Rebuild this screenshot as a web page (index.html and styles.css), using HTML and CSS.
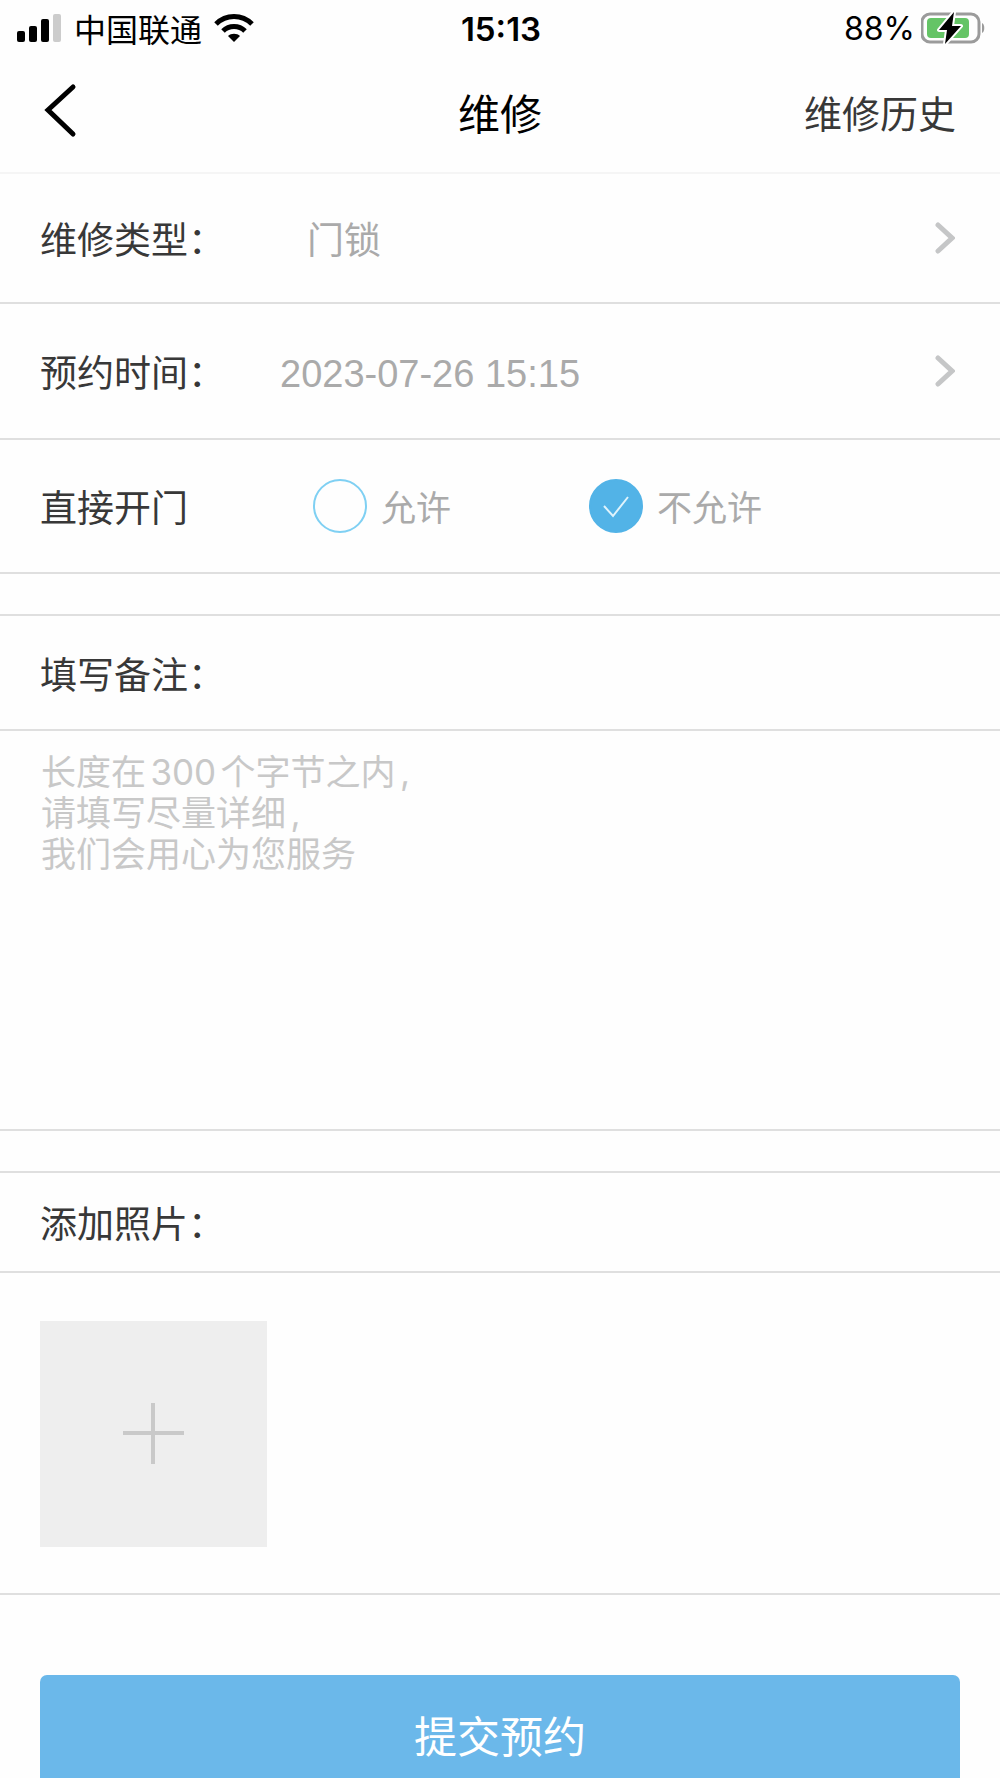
FILE: index.html
```html
<!DOCTYPE html>
<html lang="zh-CN">
<head>
  <meta charset="UTF-8" />
  <meta name="viewport" content="width=device-width, initial-scale=1.0"/>
  <title>维修</title>
  <link rel="stylesheet" href="styles.css">
</head>
<body>
  <div class="status-bar">
    <div class="status-left">
      <svg class="signal" width="45" height="28" viewBox="0 0 45 28" aria-hidden="true">
        <rect x="0" y="17" width="8" height="11" rx="2"/>
        <rect x="12" y="12" width="8" height="16" rx="2"/>
        <rect x="24" y="5" width="8" height="23" rx="2"/>
        <rect x="36" y="0" width="8" height="28" rx="2" fill="#ccc"/>
      </svg>
      <span class="carrier">中国联通</span>
      <svg class="wifi" width="40" height="30" viewBox="0 0 40 30" aria-hidden="true">
        <g fill="none" stroke="#000" stroke-width="5">
          <path d="M2 11 C12 1 28 1 38 11"/>
          <path d="M9 18 C15 12 25 12 31 18"/>
        </g>
        <path d="M20 29 L14 23 C17 20 23 20 26 23 Z"/>
      </svg>
    </div>
    <time class="clock">15:13</time>
    <div class="status-right">
      <span class="percent">88%</span>
      <svg class="battery" width="64" height="34" viewBox="0 0 64 34" aria-hidden="true">
        <rect x="1" y="3" width="57" height="28" rx="8" fill="none" stroke="#9b9b9b" stroke-width="3"/>
        <path d="M61 12 C64 13 64 21 61 22 Z" fill="#9b9b9b"/>
        <rect x="6" y="7" width="42" height="20" rx="4" fill="#65c466"/>
        <path d="M33 1 L18 19 H26 L24 33 L40 15 H31 Z" stroke="#fff" stroke-width="4" stroke-linejoin="round" paint-order="stroke"/>
      </svg>
    </div>
  </div>

  <header>
    <button class="back-btn" type="button" aria-label="返回">
      <svg width="32" height="54" viewBox="0 0 32 54" aria-hidden="true">
        <path d="M29 2 L4 25 L29 49"/>
      </svg>
    </button>
    <h1>维修</h1>
    <a class="history-link" href="#history">维修历史</a>
  </header>

  <form class="repair-form">
    <div class="row row-type">
      <label class="row-label" for="repair-type">维修类型：</label>
      <select id="repair-type">
        <option>门锁</option>
      </select>
      <svg class="arrow" width="20" height="32" viewBox="0 0 20 32" aria-hidden="true">
        <path d="M3 3 L17 16 L3 29"/>
      </svg>
    </div>

    <div class="row row-time">
      <label class="row-label" for="repair-time">预约时间：</label>
      <input type="text" id="repair-time" value="2023-07-26 15:15" readonly/>
      <svg class="arrow" width="20" height="32" viewBox="0 0 20 32" aria-hidden="true">
        <path d="M3 3 L17 16 L3 29"/>
      </svg>
    </div>

    <div class="row row-door" role="radiogroup" aria-labelledby="door-label">
      <span class="row-label" id="door-label">直接开门</span>
      <div class="choices">
        <label class="choice"><input type="radio" name="door" value="1"/>允许</label>
        <label class="choice"><input type="radio" name="door" value="0" checked/>不允许</label>
      </div>
    </div>

    <section class="block">
      <label class="block-title remark-title" for="remark">填写备注：</label>
      <textarea id="remark" placeholder="长度在300个字节之内,&#10;请填写尽量详细,&#10;我们会用心为您服务"></textarea>
    </section>

    <section class="block">
      <h2 class="block-title photo-title">添加照片：</h2>
      <div class="photos">
        <button class="add-photo" type="button" aria-label="添加照片">
          <svg width="62" height="62" viewBox="0 0 62 62" aria-hidden="true">
            <path d="M0 30 H61 M30 0 V61"/>
          </svg>
        </button>
      </div>
    </section>

    <button class="submit-btn" type="submit">提交预约</button>
  </form>
</body>
</html>
```
FILE: styles.css
```css
:root {
  --text-color: #383838;
  --muted-color: #aaa;
  --line-color: #dfdfdf;
  --primary-color: #6bb8ea;
  --check-color: #52b3e7;
}

* {
  box-sizing: border-box;
  margin: 0;
  padding: 0;
}

html {
  overflow: hidden auto;
  scrollbar-width: none;
}

body {
  background-color: #fefefe;
  color: var(--text-color);
  font-family: "Noto Sans CJK SC", sans-serif;
  font-size: 37px;
  line-height: 54px;
}

button, input, select, textarea {
  font: inherit;
  color: inherit;
  border: none;
  background: none;
  outline: none;
}

button {
  cursor: pointer;
}

svg {
  display: block;
  flex: none;
}

/* status bar */
.status-bar {
  display: grid;
  grid-template-columns: 1fr auto 1fr;
  align-items: center;
  height: 52px;
  padding: 0 15px 0 17px;
  color: #000;
  font-size: 32px;
}

.status-left, .status-right {
  display: flex;
  align-items: center;
}

.status-left {
  gap: 12px;
}

.status-right {
  justify-content: flex-end;
  gap: 6px;
}

.carrier {
  line-height: 50px;
}

.clock, .percent {
  padding-top: 2px;
  font-family: Inter, sans-serif;
}

.clock {
  font-size: 33px;
  font-weight: 600;
}

/* header */
header {
  display: grid;
  grid-template-columns: 1fr auto 1fr;
  align-items: center;
  height: 122px;
  padding: 0 44px;
  border-bottom: 2px solid #f5f5f5;
}

.back-btn {
  justify-self: start;
}

.back-btn path {
  fill: none;
  stroke: #000;
  stroke-width: 5;
  stroke-linecap: round;
}

.back-btn svg {
  overflow: visible;
}

h1 {
  color: #000;
  font-size: 42px;
  font-weight: 400;
}

.history-link {
  justify-self: end;
  color: var(--text-color);
  font-size: 38px;
  text-decoration: none;
}

/* form rows */
.row {
  display: flex;
  align-items: center;
  padding: 0 45px 0 40px;
  border-bottom: 2px solid var(--line-color);
}

.row-type {
  height: 130px;
}

.row-time {
  height: 136px;
}

.row-door {
  height: 134px;
}

.row-label {
  flex: none;
  width: 240px;
}

.row select, .row input[type="text"] {
  flex: 1;
  min-width: 0;
  color: var(--muted-color);
}

.row select {
  appearance: none;
  padding-left: 27px;
}

.row input[type="text"] {
  padding-top: 6px;
  font-family: "Liberation Sans", sans-serif;
  font-size: 38px;
}

.arrow path {
  fill: none;
  stroke: #c5c6c7;
  stroke-width: 5;
  stroke-linecap: round;
}

.choices {
  display: flex;
  gap: 138px;
  padding-left: 33px;
}

.choice {
  display: flex;
  align-items: center;
  gap: 14px;
  color: var(--muted-color);
  font-size: 35px;
}

.choice input {
  appearance: none;
  width: 54px;
  height: 54px;
  border: 2px solid #7fd0f3;
  border-radius: 50%;
}

.choice input:checked {
  border-color: var(--check-color);
  background: var(--check-color) url("data:image/svg+xml,%3Csvg xmlns='http://www.w3.org/2000/svg' viewBox='0 0 50 50'%3E%3Cpath d='M13 25l9 10 15-19' fill='none' stroke='%23dff3fc' stroke-width='2'/%3E%3C/svg%3E") center / 50px no-repeat;
}

/* remark and photos */
.block {
  margin-top: 40px;
  border-top: 2px solid var(--line-color);
  border-bottom: 2px solid var(--line-color);
}

.block-title {
  display: flex;
  align-items: center;
  padding: 0 40px;
  border-bottom: 2px solid var(--line-color);
  font-size: 37px;
  font-weight: 400;
}

.remark-title {
  height: 115px;
}

.photo-title {
  height: 100px;
}

textarea {
  display: block;
  width: 100%;
  height: 398px;
  padding: 21px 41px;
  font-family: Inter, "Noto Sans CJK SC", sans-serif;
  font-size: 35px;
  line-height: 41px;
  resize: none;
  text-autospace: normal;
}

textarea::placeholder {
  color: #c8c8c8;
}

.photos {
  padding: 48px 40px 46px;
}

.add-photo {
  display: flex;
  align-items: center;
  justify-content: center;
  width: 227px;
  height: 226px;
  background-color: #eee;
}

.add-photo path {
  stroke: #c9c9c9;
  stroke-width: 4;
}

.submit-btn {
  display: block;
  width: calc(100% - 80px);
  height: 118px;
  margin: 80px 40px 0;
  border-radius: 7px;
  background-color: var(--primary-color);
  color: #fff;
  font-size: 43px;
}
```
